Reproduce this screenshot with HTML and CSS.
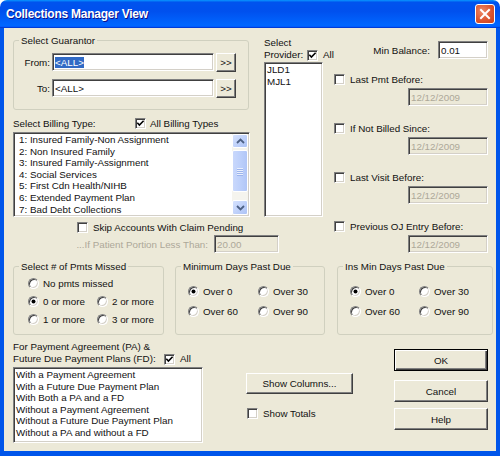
FILE: index.html
```html
<!DOCTYPE html>
<html>
<head>
<meta charset="utf-8">
<title>Collections Manager View</title>
<link rel="stylesheet" href="styles.css">
</head>
<body>
<div class="window">
  <div class="titlebar">
    <span class="title">Collections Manager View</span>
    <span class="close"><svg width="12" height="12" viewBox="0 0 12 12"><path d="M2 2 L10 10 M10 2 L2 10" stroke="#fff" stroke-width="2" stroke-linecap="square"/></svg></span>
  </div>
  <div class="client">
    <div class="top">
      <div class="col-left">
        <div class="group guarantor">
          <span class="group-title">Select Guarantor</span>
          <div class="g-row g-first">
            <span class="g-label">From:</span>
            <span class="textbox g-input"><span class="sel">&lt;ALL&gt;</span></span>
            <span class="btn g-btn">&gt;&gt;</span>
          </div>
          <div class="g-row g-second">
            <span class="g-label">To:</span>
            <span class="textbox g-input">&lt;ALL&gt;</span>
            <span class="btn g-btn">&gt;&gt;</span>
          </div>
        </div>
        <div class="billing-head">
          <span>Select Billing Type:</span>
          <span class="check-item"><span class="cb checked"><svg width="9" height="9" viewBox="0 0 9 9"><path d="M1.3 3.8 L3.4 6 L7.6 1.8" stroke="#000" stroke-width="1.6" fill="none"/></svg></span><span class="cb-label">All Billing Types</span></span>
        </div>
        <div class="listbox billing">
          <div class="items">
            <div>1: Insured Family-Non Assignment</div>
            <div>2: Non Insured Family</div>
            <div>3: Insured Family-Assignment</div>
            <div>4: Social Services</div>
            <div>5: First Cdn Health/NIHB</div>
            <div>6: Extended Payment Plan</div>
            <div>7: Bad Debt Collections</div>
          </div>
          <div class="scrollbar">
            <span class="sb-btn sb-up"><svg width="9" height="6" viewBox="0 0 9 6"><path d="M1 5 L4.5 1.5 L8 5" stroke="#4D6185" stroke-width="1.8" fill="none"/></svg></span>
            <span class="sb-thumb"><span class="grip"></span><span class="grip"></span><span class="grip"></span><span class="grip"></span></span>
            <span class="sb-track"></span>
            <span class="sb-btn sb-down"><svg width="9" height="6" viewBox="0 0 9 6"><path d="M1 1 L4.5 4.5 L8 1" stroke="#4D6185" stroke-width="1.8" fill="none"/></svg></span>
          </div>
        </div>
        <div class="skip-row">
          <span class="cb"></span><span class="cb-label">Skip Accounts With Claim Pending</span>
        </div>
        <div class="portion-row">
          <span class="disabled-text">...If Patient Portion Less Than:</span>
          <span class="textbox disabled portion">20.00</span>
        </div>
      </div>

      <div class="col-prov">
        <div class="prov-line">Select</div>
        <div class="prov-line prov-second">
          <span class="prov-label">Provider:</span>
          <span class="cb checked"><svg width="9" height="9" viewBox="0 0 9 9"><path d="M1.3 3.8 L3.4 6 L7.6 1.8" stroke="#000" stroke-width="1.6" fill="none"/></svg></span><span class="cb-label">All</span>
        </div>
        <div class="listbox prov-list">
          <div class="items">
            <div>JLD1</div>
            <div>MJL1</div>
          </div>
        </div>
      </div>

      <div class="col-right">
        <div class="minbal">
          <span class="minbal-label">Min Balance:</span>
          <span class="textbox minbal-input">0.01</span>
        </div>
        <div class="opt-row opt-first"><span class="cb"></span><span class="cb-label">Last Pmt Before:</span></div>
        <span class="textbox disabled date">12/12/2009</span>
        <div class="opt-row"><span class="cb"></span><span class="cb-label">If Not Billed Since:</span></div>
        <span class="textbox disabled date">12/12/2009</span>
        <div class="opt-row"><span class="cb"></span><span class="cb-label">Last Visit Before:</span></div>
        <span class="textbox disabled date">12/12/2009</span>
        <div class="opt-row"><span class="cb"></span><span class="cb-label">Previous OJ Entry Before:</span></div>
        <span class="textbox disabled date">12/12/2009</span>
      </div>
    </div>

    <div class="groups">
      <div class="group pmts">
        <span class="group-title">Select # of Pmts Missed</span>
        <div class="radio-row pm-r1">
          <span class="radio-item"><span class="radio"></span><span class="r-label">No pmts missed</span></span>
        </div>
        <div class="radio-row pm-r2">
          <span class="radio-item"><span class="radio on"></span><span class="r-label">0 or more</span></span>
          <span class="radio-item"><span class="radio"></span><span class="r-label">2 or more</span></span>
        </div>
        <div class="radio-row pm-r2">
          <span class="radio-item"><span class="radio"></span><span class="r-label">1 or more</span></span>
          <span class="radio-item"><span class="radio"></span><span class="r-label">3 or more</span></span>
        </div>
      </div>
      <div class="group mindays">
        <span class="group-title">Minimum Days Past Due</span>
        <div class="radio-row md-r1">
          <span class="radio-item w70"><span class="radio on"></span><span class="r-label">Over 0</span></span>
          <span class="radio-item"><span class="radio"></span><span class="r-label">Over 30</span></span>
        </div>
        <div class="radio-row md-r2">
          <span class="radio-item w70"><span class="radio"></span><span class="r-label">Over 60</span></span>
          <span class="radio-item"><span class="radio"></span><span class="r-label">Over 90</span></span>
        </div>
      </div>
      <div class="group insdays">
        <span class="group-title">Ins Min Days Past Due</span>
        <div class="radio-row md-r1">
          <span class="radio-item"><span class="radio on"></span><span class="r-label">Over 0</span></span>
          <span class="radio-item"><span class="radio"></span><span class="r-label">Over 30</span></span>
        </div>
        <div class="radio-row md-r2">
          <span class="radio-item"><span class="radio"></span><span class="r-label">Over 60</span></span>
          <span class="radio-item"><span class="radio"></span><span class="r-label">Over 90</span></span>
        </div>
      </div>
    </div>

    <div class="bottom">
      <div class="pa-col">
        <div class="pa-line">For Payment Agreement (PA) &amp;</div>
        <div class="pa-line pa-second">
          <span class="pa-label">Future Due Payment Plans (FD):</span>
          <span class="cb checked"><svg width="9" height="9" viewBox="0 0 9 9"><path d="M1.3 3.8 L3.4 6 L7.6 1.8" stroke="#000" stroke-width="1.6" fill="none"/></svg></span><span class="cb-label">All</span>
        </div>
        <div class="listbox pa-list">
          <div class="items">
            <div>With a Payment Agreement</div>
            <div>With a Future Due Payment Plan</div>
            <div>With Both a PA and a FD</div>
            <div>Without a Payment Agreement</div>
            <div>Without a Future Due Payment Plan</div>
            <div>Without a PA and without a FD</div>
          </div>
        </div>
      </div>
      <div class="mid-col">
        <span class="btn show-columns">Show Columns...</span>
        <div class="totals-row"><span class="cb"></span><span class="cb-label">Show Totals</span></div>
      </div>
      <div class="btn-col">
        <span class="btn default ok">OK</span>
        <span class="btn cancel">Cancel</span>
        <span class="btn help">Help</span>
      </div>
    </div>
  </div>
</div>
</body>
</html>
```

FILE: styles.css
```css
* { box-sizing: border-box; }

body {
  margin: 0;
  background: #fff;
  font-family: "Liberation Sans", Arial, sans-serif;
  font-size: 9.8px;
  color: #111;
}

.window {
  width: 500px;
  height: 456px;
  display: flex;
  flex-direction: column;
}

.titlebar {
  height: 28px;
  flex: none;
  border-radius: 7px 7px 0 0;
  background: linear-gradient(180deg, #0997ff 0%, #0053ee 8%, #0050ee 40%, #0066ff 88%, #0066ff 93%, #005bff 95%, #003dd7 96%, #003dd7 100%);
  display: flex;
  align-items: center;
  padding: 0 5px 0 6px;
}

.title {
  flex: 1;
  color: #fff;
  font-weight: bold;
  font-size: 12px;
  letter-spacing: -0.25px;
  text-shadow: 1px 1px #0f1089;
}

.close {
  width: 20px;
  height: 20px;
  border: 1px solid #fff;
  border-radius: 3px;
  background: radial-gradient(circle at 35% 35%, #ee8a68 0%, #dc5530 55%, #c8401a 100%);
  display: flex;
  align-items: center;
  justify-content: center;
}

.client {
  flex: 1;
  background: #ece9d8;
  border: 4px solid #0055ea;
  border-top: 0;
  border-bottom-width: 5px;
  padding-left: 9px;
}

/* generic controls */
.group {
  border: 1px solid #d0d0bf;
  border-radius: 3px;
}

.group-title {
  display: block;
  width: max-content;
  margin: -7px 0 0 5px;
  padding: 0 2px;
  line-height: 13px;
  background: #ece9d8;
}

.textbox {
  display: flex;
  align-items: center;
  background: #fff;
  border: 1px solid;
  border-color: #808080 #fff #fff #808080;
  box-shadow: inset 1px 1px #404040, inset -1px -1px #d4d0c8;
  padding-left: 2px;
  white-space: nowrap;
}

.textbox.disabled {
  background: #ece9d8;
  color: #aca899;
}

.sel {
  background: #316ac5;
  color: #fff;
  line-height: 11px;
}

.btn {
  display: flex;
  align-items: center;
  justify-content: center;
  background: #ece9d8;
  border: 1px solid;
  border-color: #fff #404040 #404040 #fff;
  box-shadow: inset -1px -1px #808080;
  white-space: nowrap;
}

.btn.default {
  border: 1px solid #000;
  box-shadow: inset 1px 1px #fff, inset -1px -1px #404040, inset -2px -2px #808080;
}

.cb {
  width: 11px;
  height: 11px;
  flex: none;
  background: #fff;
  border: 1px solid;
  border-color: #808080 #fff #fff #808080;
  box-shadow: inset 1px 1px #404040, inset -1px -1px #d4d0c8;
  display: flex;
  align-items: center;
  justify-content: center;
}

.cb-label {
  margin-left: 5px;
  white-space: nowrap;
}

.check-item {
  display: flex;
  align-items: center;
}

.check-item .cb-label { margin-left: 4px; }

.radio {
  width: 11px;
  height: 11px;
  flex: none;
  border-radius: 50%;
  background: #fff;
  border: 1px solid;
  border-color: #808080 #fff #fff #808080;
  box-shadow: inset 1px 1px #404040, inset -1px -1px #d4d0c8;
  display: flex;
  align-items: center;
  justify-content: center;
}

.radio.on::after {
  content: "";
  width: 3px;
  height: 3px;
  border-radius: 50%;
  background: #000;
  box-shadow: 0 0 0 0.5px #000;
}

.r-label {
  margin-left: 4px;
  white-space: nowrap;
}

.listbox {
  background: #fff;
  border: 1px solid;
  border-color: #808080 #fff #fff #808080;
  box-shadow: inset 1px 1px #404040, inset -1px -1px #d4d0c8;
  padding: 1px;
  overflow: hidden;
}

.items {
  line-height: 11.6px;
  white-space: nowrap;
  overflow: hidden;
}

/* top section */
.top {
  display: flex;
  align-items: flex-start;
  height: 225px;
}

.col-left {
  width: 237px;
  flex: none;
}

.guarantor {
  margin-top: 12px;
  width: 236px;
  height: 70px;
}

.g-row {
  display: flex;
  align-items: center;
  height: 18px;
}

.g-first { margin-top: 6px; }
.g-second { margin-top: 8px; }

.g-label {
  width: 37px;
  text-align: right;
  padding-right: 1px;
}

.g-input {
  width: 162px;
  height: 18px;
  margin-left: 1px;
}

.g-btn {
  width: 20px;
  height: 19px;
  margin-left: 2px;
}

.billing-head {
  margin-top: 7px;
  height: 13px;
  display: grid;
  grid-template-columns: 122px auto;
  align-items: center;
  line-height: 13px;
}

.billing {
  margin-top: 2px;
  width: 237px;
  height: 85px;
  display: flex;
}

.billing .items {
  flex: 1;
  padding-left: 4px;
}

.scrollbar {
  width: 16px;
  flex: none;
  display: flex;
  flex-direction: column;
  background: #f5f4ee;
}

.sb-btn {
  height: 15px;
  flex: none;
  border: 1px solid #fff;
  border-radius: 2px;
  background: linear-gradient(135deg, #d5e1fd 0%, #bccffa 60%, #adc3f5 100%);
  display: flex;
  align-items: center;
  justify-content: center;
}

.sb-up { height: 14px; }

.sb-thumb {
  height: 42px;
  flex: none;
  margin-top: 2px;
  border: 1px solid #fff;
  border-radius: 2px;
  background: linear-gradient(90deg, #c9d8fc 0%, #bdd0fb 50%, #b1c6f7 100%);
  display: flex;
  flex-direction: column;
  align-items: center;
  justify-content: center;
  gap: 1px;
}

.grip {
  width: 6px;
  height: 1px;
  background: #e9effd;
  box-shadow: 0 1px #9cb4ec;
}

.sb-track { flex: 1; }

.skip-row {
  margin-top: 4px;
  height: 13px;
  display: flex;
  align-items: center;
  padding-left: 64px;
}

.portion-row {
  margin-top: 1px;
  width: 266px;
  height: 18px;
  display: flex;
  align-items: center;
  justify-content: flex-end;
}

.disabled-text {
  color: #aca899;
  margin-right: 6px;
  white-space: nowrap;
}

.portion {
  width: 65px;
  height: 18px;
}

.col-prov {
  width: 59px;
  flex: none;
  margin-left: 14px;
  margin-top: 9px;
}

.prov-line {
  line-height: 12px;
  height: 12px;
  white-space: nowrap;
}

.prov-second {
  display: flex;
  align-items: center;
}

.prov-label { width: 43px; flex: none; }

.prov-list {
  margin-top: 1px;
  width: 59px;
  height: 155px;
}

.prov-list .items { padding-left: 1px; }

.col-right {
  width: 154px;
  flex: none;
  margin-left: 11px;
  margin-top: 13px;
  display: flex;
  flex-direction: column;
}

.minbal {
  display: flex;
  align-items: center;
  justify-content: flex-end;
  height: 18px;
}

.minbal-label { margin-right: 8px; }

.minbal-input {
  width: 50px;
  height: 18px;
}

.opt-row {
  display: flex;
  align-items: center;
  height: 13px;
  margin-top: 16px;
}

.opt-row.opt-first { margin-top: 14px; }

.date {
  width: 80px;
  height: 18px;
  margin-top: 2px;
  align-self: flex-end;
}

/* group row */
.groups {
  display: flex;
  margin-top: 13px;
  height: 69px;
}

.groups .group { height: 69px; flex: none; }

.pmts { width: 151px; padding-left: 14px; }
.mindays { width: 150px; margin-left: 11px; padding-left: 12px; }
.insdays { width: 156px; margin-left: 12px; padding-left: 12px; }

.groups .group-title { margin-left: -9px; }
.mindays .group-title, .insdays .group-title { margin-left: -7px; }

.radio-row {
  display: flex;
  align-items: center;
  height: 13px;
}

.radio-item {
  display: flex;
  align-items: center;
  width: 69px;
  flex: none;
}

.radio-item.w70 { width: 70px; }

.pm-r1 { margin-top: 4px; }
.pm-r2 { margin-top: 5px; }
.md-r1 { margin-top: 12px; }
.md-r2 { margin-top: 7px; }

/* bottom section */
.bottom {
  display: flex;
  align-items: flex-start;
  margin-top: 6px;
}

.pa-col { width: 190px; flex: none; }

.pa-line {
  line-height: 12px;
  height: 12px;
  white-space: nowrap;
}

.pa-second {
  display: flex;
  align-items: center;
}

.pa-label { width: 151px; flex: none; }

.pa-list {
  margin-top: 2px;
  width: 190px;
  height: 76px;
}

.pa-list .items { padding-left: 1px; }

.mid-col {
  margin-left: 43px;
  margin-top: 32px;
  flex: none;
}

.show-columns {
  width: 107px;
  height: 21px;
}

.totals-row {
  margin-top: 13px;
  height: 13px;
  display: flex;
  align-items: center;
  padding-left: 1px;
}

.btn-col {
  margin-left: 41px;
  margin-top: 8px;
  width: 94px;
  flex: none;
  display: flex;
  flex-direction: column;
}

.btn-col .btn { height: 22px; }
.cancel { margin-top: 9px; }
.help { margin-top: 6px; }
```
